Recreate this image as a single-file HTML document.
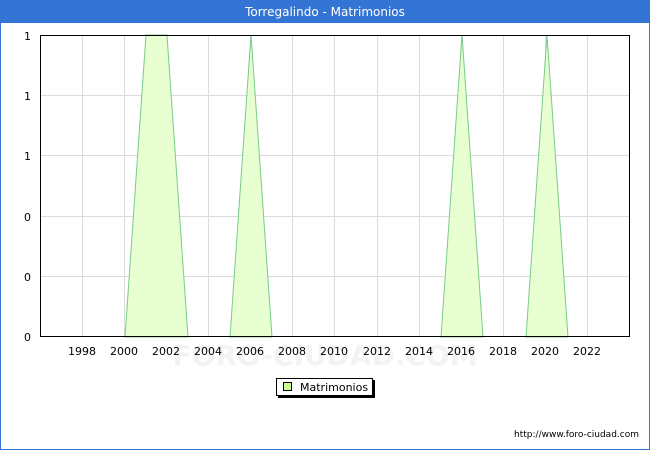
<html><body style="margin:0;width:650px;height:450px;overflow:hidden;background:#fff">
<svg width="650" height="450" xmlns="http://www.w3.org/2000/svg" style="display:block;font-family:'DejaVu Sans','Liberation Sans',sans-serif">
<rect x="0.5" y="0.5" width="649" height="449" fill="#fff" stroke="#3474d4"/>
<rect x="0" y="0" width="650" height="23" fill="#3474d4"/>
<text x="325" y="16" text-anchor="middle" fill="#fff" font-size="12">Torregalindo - Matrimonios</text>
<g stroke="#dcdcdc" stroke-width="1">
<line x1="40" y1="95.5" x2="630" y2="95.5"/><line x1="40" y1="155.5" x2="630" y2="155.5"/><line x1="40" y1="216.5" x2="630" y2="216.5"/><line x1="40" y1="276.5" x2="630" y2="276.5"/>
<line x1="82.5" y1="35" x2="82.5" y2="337"/><line x1="124.5" y1="35" x2="124.5" y2="337"/><line x1="166.5" y1="35" x2="166.5" y2="337"/><line x1="208.5" y1="35" x2="208.5" y2="337"/><line x1="250.5" y1="35" x2="250.5" y2="337"/><line x1="292.5" y1="35" x2="292.5" y2="337"/><line x1="334.5" y1="35" x2="334.5" y2="337"/><line x1="377.5" y1="35" x2="377.5" y2="337"/><line x1="419.5" y1="35" x2="419.5" y2="337"/><line x1="461.5" y1="35" x2="461.5" y2="337"/><line x1="503.5" y1="35" x2="503.5" y2="337"/><line x1="545.5" y1="35" x2="545.5" y2="337"/><line x1="587.5" y1="35" x2="587.5" y2="337"/>
</g>
<g fill="#e6ffcc" fill-opacity="0.9" stroke="#77cc88" stroke-width="1">
<polygon points="125,337 146,35 167,35 188,337"/>
<polygon points="230,337 251,35 272,337"/>
<polygon points="441,337 462,35 483,337"/>
<polygon points="526,337 547,35 568,337"/>
</g>
<text x="325" y="365" text-anchor="middle" fill="#f3f3f3" font-size="28" font-weight="bold">FORO-CIUDAD.COM</text>
<rect x="40.5" y="35.5" width="589" height="301" fill="none" stroke="#000"/>
<g font-size="11" fill="#000" text-anchor="end">
<text x="31" y="40">1</text><text x="31" y="100">1</text><text x="31" y="160">1</text><text x="31" y="221">0</text><text x="31" y="281">0</text><text x="31" y="341">0</text>
</g>
<g font-size="11" fill="#000" text-anchor="middle">
<text x="82" y="355">1998</text><text x="124" y="355">2000</text><text x="166" y="355">2002</text><text x="208" y="355">2004</text><text x="250" y="355">2006</text><text x="292" y="355">2008</text><text x="334" y="355">2010</text><text x="377" y="355">2012</text><text x="419" y="355">2014</text><text x="461" y="355">2016</text><text x="503" y="355">2018</text><text x="545" y="355">2020</text><text x="587" y="355">2022</text>
</g>
<rect x="278" y="380" width="97" height="18" fill="#000"/>
<rect x="276.5" y="378.5" width="96" height="17" fill="#fff" stroke="#000"/>
<rect x="283.5" y="382.5" width="8" height="8" fill="#ccff99" stroke="#000"/>
<text x="300" y="391" font-size="11">Matrimonios</text>
<text x="639" y="437" text-anchor="end" font-size="9">http://www.foro-ciudad.com</text>
</svg>
</body></html>
